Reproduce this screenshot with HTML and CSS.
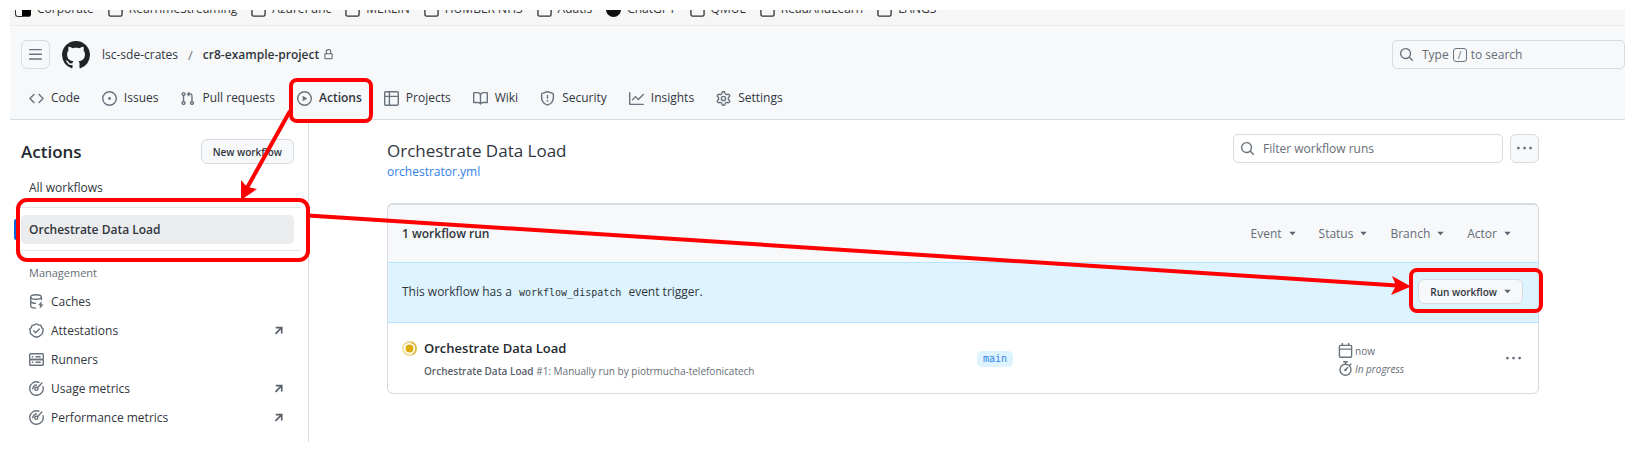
FILE: index.html
```html
<!DOCTYPE html>
<html lang="en">
<head>
<meta charset="utf-8">
<title>Actions · cr8-example-project</title>
<link rel="stylesheet" href="styles.css">
</head>
<body>
<svg class="sprite" aria-hidden="true">
  <symbol id="folder" viewBox="0 0 16 16"><path d="M1 4.500A1.500 1.500 0 0 1 2.500 3h3.500l2 2h5.500A1.500 1.500 0 0 1 15 6.500v7a1.500 1.500 0 0 1-1.500 1.500h-11A1.500 1.500 0 0 1 1 13.500Z" fill="none" stroke="currentColor" stroke-width="1.400"/></symbol>
  <symbol id="bars" viewBox="0 0 16 16"><path d="M1 2.750A.75.75 0 0 1 1.750 2h12.500a.75.75 0 0 1 0 1.500H1.750A.75.75 0 0 1 1 2.750Zm0 5A.75.75 0 0 1 1.750 7h12.500a.75.75 0 0 1 0 1.500H1.750A.75.75 0 0 1 1 7.750ZM1.750 12h12.500a.75.75 0 0 1 0 1.500H1.750a.75.75 0 0 1 0-1.500Z"/></symbol>
  <symbol id="github" viewBox="0 0 16 16"><path d="M8 0c4.420 0 8 3.580 8 8a8.013 8.013 0 0 1-5.450 7.590c-.4.08-.55-.17-.55-.38 0-.27.01-1.130.01-2.200 0-.75-.25-1.230-.54-1.480 1.780-.2 3.650-.88 3.650-3.950 0-.88-.31-1.590-.82-2.150.08-.2.36-1.020-.08-2.120 0 0-.67-.22-2.200.82-.64-.18-1.320-.27-2-.27-.68 0-1.360.09-2 .27-1.530-1.030-2.200-.82-2.200-.82-.44 1.100-.16 1.920-.08 2.120-.51.56-.82 1.280-.82 2.150 0 3.060 1.860 3.750 3.640 3.950-.23.2-.44.55-.51 1.070-.46.21-1.610.55-2.330-.66-.15-.24-.6-.83-1.230-.82-.67.01-.27.38.01.53.34.19.73.9.82 1.130.16.45.68 1.310 2.690.94 0 .67.01 1.300.01 1.490 0 .21-.15.45-.55.38A7.995 7.995 0 0 1 0 8c0-4.420 3.580-8 8-8Z"/></symbol>
  <symbol id="lock" viewBox="0 0 16 16"><path d="M4 4a4 4 0 0 1 8 0v2h.25c.966 0 1.750.784 1.750 1.750v5.500A1.750 1.750 0 0 1 12.250 15h-8.500A1.750 1.750 0 0 1 2 13.250v-5.500C2 6.784 2.784 6 3.750 6H4Zm8.250 3.500h-8.500a.25.25 0 0 0-.25.25v5.500c0 .138.112.25.25.25h8.500a.25.25 0 0 0 .25-.25v-5.500a.25.25 0 0 0-.25-.25ZM10.500 6V4a2.500 2.500 0 1 0-5 0v2Z"/></symbol>
  <symbol id="code" viewBox="0 0 16 16"><path d="m11.280 3.220 4.250 4.250a.75.75 0 0 1 0 1.060l-4.250 4.250a.749.749 0 0 1-1.275-.326.749.749 0 0 1 .215-.734L13.940 8l-3.720-3.720a.749.749 0 0 1 .326-1.275.749.749 0 0 1 .734.215Zm-6.560 0a.751.751 0 0 1 1.042.018.751.751 0 0 1 .018 1.042L2.060 8l3.720 3.720a.749.749 0 0 1-.326 1.275.749.749 0 0 1-.734-.215L.47 8.530a.75.75 0 0 1 0-1.060Z"/></symbol>
  <symbol id="issue" viewBox="0 0 16 16"><path d="M8 9.500a1.500 1.500 0 1 0 0-3 1.500 1.500 0 0 0 0 3Z"/><path d="M8 0a8 8 0 1 1 0 16A8 8 0 0 1 8 0ZM1.500 8a6.500 6.500 0 1 0 13 0 6.500 6.500 0 0 0-13 0Z"/></symbol>
  <symbol id="pull" viewBox="0 0 16 16"><path d="M1.500 3.250a2.250 2.250 0 1 1 3 2.122v5.256a2.251 2.251 0 1 1-1.500 0V5.372A2.250 2.250 0 0 1 1.500 3.250Zm5.677-.177L9.573.677A.25.25 0 0 1 10 .854V2.500h1A2.500 2.500 0 0 1 13.500 5v5.628a2.251 2.251 0 1 1-1.500 0V5a1 1 0 0 0-1-1h-1v1.646a.25.25 0 0 1-.427.177L7.177 3.427a.25.25 0 0 1 0-.354ZM3.750 2.500a.75.75 0 1 0 0 1.500.75.75 0 0 0 0-1.500Zm0 9.500a.75.75 0 1 0 0 1.500.75.75 0 0 0 0-1.500Zm8.250.75a.75.75 0 1 0 1.500 0 .75.75 0 0 0-1.500 0Z"/></symbol>
  <symbol id="play" viewBox="0 0 16 16"><path d="M8 0a8 8 0 1 1 0 16A8 8 0 0 1 8 0ZM1.500 8a6.500 6.500 0 1 0 13 0 6.500 6.500 0 0 0-13 0Zm4.879-2.773 4.264 2.559a.25.25 0 0 1 0 .428l-4.264 2.559A.25.25 0 0 1 6 10.559V5.442a.25.25 0 0 1 .379-.215Z"/></symbol>
  <symbol id="table" viewBox="0 0 16 16"><path d="M0 1.750C0 .784.784 0 1.750 0h12.500C15.216 0 16 .784 16 1.750v12.500A1.750 1.750 0 0 1 14.250 16H1.750A1.750 1.750 0 0 1 0 14.250ZM6.500 6.500v8h7.750a.25.25 0 0 0 .25-.25V6.500Zm8-1.500V1.750a.25.25 0 0 0-.25-.25H6.500V5Zm-13 1.500v7.750c0 .138.112.25.25.25H5v-8ZM5 5V1.500H1.750a.25.25 0 0 0-.25.25V5Z"/></symbol>
  <symbol id="book" viewBox="0 0 16 16"><path d="M0 1.750A.75.75 0 0 1 .75 1h4.253c1.227 0 2.317.59 3 1.501A3.743 3.743 0 0 1 11.006 1h4.245a.75.75 0 0 1 .75.75v10.500a.75.75 0 0 1-.75.75h-4.507a2.250 2.250 0 0 0-1.591.659l-.622.621a.75.75 0 0 1-1.060 0l-.622-.621A2.250 2.250 0 0 0 5.258 13H.75a.75.75 0 0 1-.75-.75Zm7.251 10.324.004-5.073-.002-2.253A2.250 2.250 0 0 0 5.003 2.500H1.500v9h3.757a3.750 3.750 0 0 1 1.994.574ZM8.755 4.750l-.004 7.322a3.752 3.752 0 0 1 1.992-.572H14.500v-9h-3.495a2.250 2.250 0 0 0-2.250 2.250Z"/></symbol>
  <symbol id="shield" viewBox="0 0 16 16"><path d="M7.467.133a1.748 1.748 0 0 1 1.066 0l5.250 1.680A1.750 1.750 0 0 1 15 3.480V7c0 1.566-.32 3.182-1.303 4.682-.983 1.498-2.585 2.813-5.032 3.855a1.697 1.697 0 0 1-1.330 0c-2.447-1.042-4.049-2.357-5.032-3.855C1.320 10.182 1 8.566 1 7V3.480a1.750 1.750 0 0 1 1.217-1.667Zm.61 1.429a.25.25 0 0 0-.153 0l-5.250 1.680a.25.25 0 0 0-.174.238V7c0 1.358.275 2.666 1.057 3.860.784 1.194 2.121 2.340 4.366 3.297a.196.196 0 0 0 .154 0c2.245-.956 3.582-2.104 4.366-3.298C13.225 9.666 13.500 8.360 13.500 7V3.480a.251.251 0 0 0-.174-.237l-5.250-1.680ZM8.750 4.750v3a.75.75 0 0 1-1.500 0v-3a.75.75 0 0 1 1.500 0ZM9 10.500a1 1 0 1 1-2 0 1 1 0 0 1 2 0Z"/></symbol>
  <symbol id="graph" viewBox="0 0 16 16"><path d="M1.500 1.750V13.500h13.750a.75.75 0 0 1 0 1.500H.75a.75.75 0 0 1-.75-.75V1.750a.75.75 0 0 1 1.500 0Zm14.280 2.530-5.250 5.250a.75.75 0 0 1-1.060 0L7 7.060 4.280 9.780a.751.751 0 0 1-1.042-.018.751.751 0 0 1-.018-1.042l3.250-3.250a.75.75 0 0 1 1.060 0L10 7.940l4.720-4.720a.751.751 0 0 1 1.042.018.751.751 0 0 1 .018 1.042Z"/></symbol>
  <symbol id="gear" viewBox="0 0 16 16"><path d="M8 0a8.200 8.200 0 0 1 .701.031C9.444.095 9.990.645 10.160 1.290l.288 1.107c.018.066.079.158.212.224.231.114.454.243.668.386.123.082.233.09.299.071l1.103-.303c.644-.176 1.392.021 1.820.63.27.385.506.792.704 1.218.315.675.111 1.422-.364 1.891l-.814.806c-.049.048-.098.147-.088.294.016.257.016.515 0 .772-.01.147.038.246.088.294l.814.806c.475.469.679 1.216.364 1.891a7.977 7.977 0 0 1-.704 1.217c-.428.61-1.176.807-1.820.63l-1.102-.302c-.067-.019-.177-.011-.3.071a5.909 5.909 0 0 1-.668.386c-.133.066-.194.158-.211.224l-.29 1.106c-.168.646-.715 1.196-1.458 1.260a8.006 8.006 0 0 1-1.402 0c-.743-.064-1.289-.614-1.458-1.260l-.289-1.106c-.018-.066-.079-.158-.212-.224a5.738 5.738 0 0 1-.668-.386c-.123-.082-.233-.09-.299-.071l-1.103.303c-.644.176-1.392-.021-1.820-.63a8.120 8.120 0 0 1-.704-1.218c-.315-.675-.111-1.422.363-1.891l.815-.806c.05-.048.098-.147.088-.294a6.214 6.214 0 0 1 0-.772c.01-.147-.038-.246-.088-.294l-.815-.806C.635 6.045.431 5.298.746 4.623a7.920 7.920 0 0 1 .704-1.217c.428-.61 1.176-.807 1.820-.63l1.102.302c.067.019.177.011.3-.071.214-.143.437-.272.668-.386.133-.066.194-.158.211-.224l.29-1.106C6.009.645 6.556.095 7.299.03 7.530.01 7.764 0 8 0Zm-.571 1.525c-.036.003-.108.036-.137.146l-.289 1.105c-.147.561-.549.967-.998 1.189-.173.086-.34.183-.5.29-.417.278-.97.423-1.529.27l-1.103-.303c-.109-.03-.175.016-.195.045-.22.312-.412.644-.573.99-.014.031-.021.11.059.19l.815.806c.411.406.562.957.53 1.456a4.709 4.709 0 0 0 0 .582c.032.499-.119 1.050-.53 1.456l-.815.806c-.081.08-.073.159-.059.19.162.346.353.677.573.989.02.03.085.076.195.046l1.102-.303c.56-.153 1.113-.008 1.530.27.161.107.328.204.501.29.447.222.85.629.997 1.189l.289 1.105c.029.109.101.143.137.146a6.600 6.600 0 0 0 1.142 0c.036-.003.108-.036.137-.146l.289-1.105c.147-.561.549-.967.998-1.189.173-.086.34-.183.5-.29.417-.278.97-.423 1.529-.27l1.103.303c.109.029.175-.016.195-.045.22-.313.411-.644.573-.99.014-.031.021-.11-.059-.19l-.815-.806c-.411-.406-.562-.957-.53-1.456a4.709 4.709 0 0 0 0-.582c-.032-.499.119-1.050.53-1.456l.815-.806c.081-.08.073-.159.059-.19a6.464 6.464 0 0 0-.573-.989c-.02-.03-.085-.076-.195-.046l-1.102.303c-.56.153-1.113.008-1.530-.27a4.440 4.440 0 0 0-.501-.29c-.447-.222-.85-.629-.997-1.189l-.289-1.105c-.029-.11-.101-.143-.137-.146a6.600 6.600 0 0 0-1.142 0ZM11 8a3 3 0 1 1-6 0 3 3 0 0 1 6 0ZM9.500 8a1.500 1.500 0 1 0-3.001.001A1.500 1.500 0 0 0 9.500 8Z"/></symbol>
  <symbol id="search" viewBox="0 0 16 16"><path d="M10.680 11.740a6 6 0 0 1-7.922-8.982 6 6 0 0 1 8.982 7.922l3.040 3.040a.749.749 0 0 1-.326 1.275.749.749 0 0 1-.734-.215ZM11.500 7a4.499 4.499 0 1 0-8.997 0A4.499 4.499 0 0 0 11.500 7Z"/></symbol>
  <symbol id="dots" viewBox="0 0 16 16"><path d="M8 9a1.500 1.500 0 1 0 0-3 1.500 1.500 0 0 0 0 3ZM1.500 9a1.500 1.500 0 1 0 0-3 1.500 1.500 0 0 0 0 3Zm13 0a1.500 1.500 0 1 0 0-3 1.500 1.500 0 0 0 0 3Z"/></symbol>
  <symbol id="arrow" viewBox="0 0 16 16"><path d="M3.500 13 12 4.500M4 3.800h8.700v8.700" fill="none" stroke="currentColor" stroke-width="2.400"/></symbol>
  <symbol id="caret" viewBox="0 0 8 8"><path d="M0.500 2h7L4 6Z"/></symbol>
  <symbol id="cache" viewBox="0 0 16 16"><g fill="none" stroke="currentColor" stroke-width="1.500"><ellipse cx="7.500" cy="3.200" rx="5.700" ry="2.400"/><path d="M1.800 3.200v9.300c0 1.400 2.300 2.500 5.700 2.600M13.200 3.200v3.300M1.800 7.900c.6 1.200 2.800 2 5.700 2.100"/></g><path d="M13.500 7.500 9.700 12h2.100l-.5 3.800 4.300-4.700h-2.300Z"/></symbol>
  <symbol id="verified" viewBox="0 0 16 16"><g fill="none" stroke="currentColor" stroke-width="1.500"><path d="M8 .8 10.100 2.100 12.600 2.300 13.500 4.700 15.200 6.500 14.700 8.900 14.400 11.200 12.600 12.800 10.700 14.300 8 15.200 5.300 14.300 3.400 12.800 1.600 11.200 1.300 8.900.8 6.500 2.500 4.700 3.400 2.300 5.900 2.100Z" stroke-linejoin="round"/><path d="m5 8.200 2.100 2.100L11 6.300" stroke-linecap="round"/></g></symbol>
  <symbol id="server" viewBox="0 0 16 16"><g fill="none" stroke="currentColor" stroke-width="1.500"><rect x=".75" y="1.800" width="14.500" height="6.200" rx="1"/><rect x=".75" y="8" width="14.500" height="6.200" rx="1"/><path d="M3 5h1.500M7 5h5.500M3 11h1.500M7 11h5.500"/></g></symbol>
  <symbol id="meter" viewBox="0 0 16 16"><g fill="none" stroke="currentColor" stroke-width="1.500" stroke-linecap="round"><path d="M10.500 1.300A7.200 7.200 0 1 0 14.900 6"/><circle cx="7.800" cy="8.300" r="1.700"/><path d="m9.200 7 4.600-4.800M4 8.300A4 4 0 0 1 8 4.300"/></g></symbol>
  <symbol id="calendar" viewBox="0 0 16 16"><g fill="none" stroke="currentColor" stroke-width="1.500"><rect x="1.500" y="2.500" width="13" height="12.700" rx="1"/><path d="M1.500 6.500h13M4.700 0v3M11.300 0v3"/></g></symbol>
  <symbol id="stopwatch" viewBox="0 0 16 16"><g fill="none" stroke="currentColor" stroke-width="1.500" stroke-linecap="round"><circle cx="8" cy="9.300" r="5.900"/><path d="M6 .8h4M8 1v2.300M12.700 4.200l1-1M8 9.500l2.300-2.500"/></g><circle cx="7.900" cy="9.600" r="1.300"/></symbol>
</svg>

<div class="bookmarks">
  <span class="bookmark"><span class="fav"></span>Corporate</span>
  <span class="bookmark"><svg class="icon"><use href="#folder"/></svg>RealTimeStreaming</span>
  <span class="bookmark"><svg class="icon"><use href="#folder"/></svg>AzureFunc</span>
  <span class="bookmark"><svg class="icon"><use href="#folder"/></svg>MERLIN</span>
  <span class="bookmark"><svg class="icon"><use href="#folder"/></svg>HUMBER NHS</span>
  <span class="bookmark"><svg class="icon"><use href="#folder"/></svg>Adatis</span>
  <span class="bookmark"><span class="chat"></span>ChatGPT</span>
  <span class="bookmark"><svg class="icon"><use href="#folder"/></svg>QMUL</span>
  <span class="bookmark"><svg class="icon"><use href="#folder"/></svg>ReadAndLearn</span>
  <span class="bookmark"><svg class="icon"><use href="#folder"/></svg>LANGS</span>
</div>

<header class="header">
  <div class="topbar">
    <button class="square" aria-label="Open menu"><svg class="icon"><use href="#bars"/></svg></button>
    <a class="logo" href="#" aria-label="Home"><svg><use href="#github"/></svg></a>
    <a class="owner" href="#">lsc-sde-crates</a><span class="slash">/</span><a class="repo" href="#">cr8-example-project</a><svg class="lock"><use href="#lock"/></svg>
    <button class="global-search"><svg class="icon"><use href="#search"/></svg><span>Type</span><kbd>/</kbd><span>to search</span></button>
  </div>
  <nav class="tabs" aria-label="Repository">
    <a href="#"><svg class="icon"><use href="#code"/></svg>Code</a>
    <a href="#"><svg class="icon"><use href="#issue"/></svg>Issues</a>
    <a href="#"><svg class="icon"><use href="#pull"/></svg>Pull requests</a>
    <a href="#" class="current"><svg class="icon"><use href="#play"/></svg>Actions</a>
    <a href="#"><svg class="icon"><use href="#table"/></svg>Projects</a>
    <a href="#"><svg class="icon"><use href="#book"/></svg>Wiki</a>
    <a href="#"><svg class="icon"><use href="#shield"/></svg>Security</a>
    <a href="#"><svg class="icon"><use href="#graph"/></svg>Insights</a>
    <a href="#"><svg class="icon"><use href="#gear"/></svg>Settings</a>
  </nav>
</header>

<div class="layout">
  <aside class="sidebar">
    <div class="side-head"><h2>Actions</h2><button class="btn">New workflow</button></div>
    <a class="side-link" href="#">All workflows</a>
    <div class="workflows"><a class="side-link selected" href="#">Orchestrate Data Load</a></div>
    <h3>Management</h3>
    <nav class="manage" aria-label="Management">
      <a class="side-link" href="#"><svg class="icon"><use href="#cache"/></svg>Caches</a>
      <a class="side-link" href="#"><svg class="icon"><use href="#verified"/></svg>Attestations<svg class="out"><use href="#arrow"/></svg></a>
      <a class="side-link" href="#"><svg class="icon"><use href="#server"/></svg>Runners</a>
      <a class="side-link" href="#"><svg class="icon"><use href="#meter"/></svg>Usage metrics<svg class="out"><use href="#arrow"/></svg></a>
      <a class="side-link" href="#"><svg class="icon"><use href="#meter"/></svg>Performance metrics<svg class="out"><use href="#arrow"/></svg></a>
    </nav>
  </aside>
  <main class="main">
    <div class="page-head">
      <div class="page-title"><h1>Orchestrate Data Load</h1><a href="#">orchestrator.yml</a></div>
      <label class="filter"><svg class="icon"><use href="#search"/></svg><input type="text" placeholder="Filter workflow runs" aria-label="Filter workflow runs"></label>
      <button class="square" aria-label="Show workflow options"><svg class="icon"><use href="#dots"/></svg></button>
    </div>
    <section class="runs">
      <div class="runs-head">
        <strong>1 workflow run</strong>
        <div class="filters">
          <button>Event<svg class="caret"><use href="#caret"/></svg></button>
          <button>Status<svg class="caret"><use href="#caret"/></svg></button>
          <button>Branch<svg class="caret"><use href="#caret"/></svg></button>
          <button>Actor<svg class="caret"><use href="#caret"/></svg></button>
        </div>
      </div>
      <div class="dispatch">
        <p>This workflow has a <code>workflow_dispatch</code> event trigger.</p>
        <button class="btn">Run workflow<svg class="caret"><use href="#caret"/></svg></button>
      </div>
      <div class="run">
        <div class="run-info">
          <svg class="status" viewBox="0 0 16 16" role="img" aria-label="In progress"><circle cx="8" cy="8" r="7" fill="none" stroke="#f0dc9a" stroke-width="2"/><path d="M10 1.300A7 7 0 0 1 11 14.300" fill="none" stroke="#dfb63a" stroke-width="1.600"/><circle cx="8" cy="8" r="4.200" fill="#dbab0a"/></svg>
          <div>
            <a class="run-title" href="#">Orchestrate Data Load</a>
            <p class="run-sub"><b>Orchestrate Data Load</b> #1: Manually run by piotrmucha-telefonicatech</p>
          </div>
        </div>
        <div class="branch"><a href="#">main</a></div>
        <div class="times">
          <span><svg class="icon"><use href="#calendar"/></svg>now</span>
          <span><svg class="icon"><use href="#stopwatch"/></svg><i>In progress</i></span>
        </div>
        <button class="more" aria-label="Show options"><svg class="icon"><use href="#dots"/></svg></button>
      </div>
    </section>
  </main>
</div>

<svg class="marks" viewBox="0 0 1636 452" aria-hidden="true">
  <g fill="none" stroke="#f00" stroke-width="4">
    <rect x="291" y="80" width="80" height="41" rx="6"/>
    <rect x="18" y="200" width="290" height="60" rx="9"/>
    <rect x="1411" y="270" width="130" height="41" rx="6"/>
    <path d="M290 111 247 188M308 215.500 1397 285.500"/>
  </g>
  <path fill="#f00" d="M241 200 241 180 247 187 257 189ZM1411 286.500 1392 276 1396 285.500 1391 295Z"/>
</svg>
</body>
</html>
```
FILE: styles.css
```css
* { box-sizing: border-box; }
body {
  margin: 0;
  min-height: 100vh;
  padding: 10px 11px 10px 10px;
  display: flex;
  flex-direction: column;
  position: relative;
  background: #fff;
  color: #30363d;
  font: 12px/18px "Open Sans", "Noto Sans", sans-serif;
}
a { color: inherit; text-decoration: none; }
h1, h2, h3, p { margin: 0; }
button, input { font: inherit; color: inherit; margin: 0; }
svg { fill: currentColor; flex: none; display: block; }
.sprite { position: absolute; width: 0; height: 0; }
.icon { width: 15px; height: 15px; color: #6a737d; }

.bookmarks {
  display: flex;
  align-items: flex-end;
  gap: 14px;
  height: 15px;
  padding: 0 5px 8px;
  overflow: hidden;
  background: #f6f6f6;
  color: #333;
}
.bookmark { display: flex; align-items: flex-end; gap: 6px; line-height: 16px; white-space: nowrap; }
.bookmark .icon { color: #333; }
.fav { width: 16px; height: 15px; border: 1px solid #333; border-radius: 3px; border-right: 9px solid #000; }
.chat { width: 15px; height: 15px; border-radius: 50%; background: #111; }

.header { background: #f6f8fa; border-top: 1px solid #ebecee; border-bottom: 1px solid #d5dbe1; }
.topbar { display: flex; align-items: center; padding: 14px 0 14px 11px; }
.square {
  display: flex;
  align-items: center;
  justify-content: center;
  width: 29px;
  height: 29px;
  padding: 0;
  border: 1px solid #d5dbe1;
  border-radius: 6px;
  background: #f6f8fa;
}
.logo { margin: 0 12px; color: #1f2328; }
.logo svg { width: 28px; height: 28px; }
.slash { padding: 0 10px; color: #6a737d; font-size: 13px; }
.repo { font-weight: 600; }
.lock { width: 11px; height: 11px; margin-left: 4px; color: #57606a; }
.global-search {
  display: flex;
  align-items: center;
  gap: 4px;
  width: 233px;
  height: 29px;
  margin-left: auto;
  padding: 0 6px;
  border: 1px solid #d5dbe1;
  border-radius: 5px;
  background: #f6f8fa;
  color: #656d76;
}
.global-search .icon { margin-right: 4px; }
.global-search kbd {
  width: 14px;
  height: 14px;
  border: 1px solid #6a737d;
  border-radius: 3px;
  font: 10px/12px "Open Sans", sans-serif;
  text-align: center;
}
.tabs { display: flex; gap: 22px; padding: 5px 19px 11px; }
.tabs a { display: flex; align-items: center; gap: 7px; line-height: 20px; }
.tabs .current { font-weight: 600; }

.layout { flex: 1; display: flex; }
.sidebar { flex: none; width: 299px; padding: 19px 14px 0 11px; border-right: 1px solid #d5dbe1; }
.side-head { display: flex; align-items: center; justify-content: space-between; }
.side-head h2 { font-size: 17px; line-height: 25px; font-weight: 600; color: #24292f; }
.btn {
  display: flex;
  align-items: center;
  gap: 7px;
  height: 25px;
  padding: 0 11px;
  border: 1px solid #d5dbe1;
  border-radius: 6px;
  background: #f6f8fa;
  font-size: 10px;
  font-weight: 600;
}
.side-link { display: flex; align-items: center; gap: 7px; height: 29px; padding: 0 8px; border-radius: 5px; }
.side-head + .side-link { margin: 9px 0 5px; }
.workflows { margin: 0 -7px 0 -6px; padding: 7px 7px 6px 6px; border: solid #e1e6eb; border-width: 1px 0; }
.selected { position: relative; background: #ebecee; font-weight: 600; }
.selected::before { content: ""; position: absolute; left: -7px; width: 4px; height: 21px; border-radius: 3px; background: #0969da; }
.sidebar h3 { padding: 14px 8px 6px; font-size: 11px; line-height: 16px; font-weight: 400; color: #656d76; }
.out { width: 11px; height: 11px; margin: 0 2px 0 auto; color: #57606a; }

.main { flex: 1; min-width: 0; padding: 14px 86px 0 78px; }
.page-head { display: flex; align-items: flex-start; gap: 7px; }
.page-title { flex: 1; padding-top: 5px; }
.page-title h1 { font-size: 17px; line-height: 24px; font-weight: 400; }
.page-title a { display: block; color: #2f81e8; }
.filter { position: relative; width: 270px; }
.filter .icon { position: absolute; left: 7px; top: 7px; }
.filter input {
  width: 100%;
  height: 29px;
  padding: 0 8px 0 29px;
  border: 1px solid #d5dbe1;
  border-radius: 5px;
  background: #fff;
}
.filter input::placeholder { color: #656d76; opacity: 1; }

.runs { margin-top: 22px; border: 1px solid #d5dbe1; border-top-width: 2px; border-radius: 6px; overflow: hidden; }
.runs-head { display: flex; align-items: center; justify-content: space-between; height: 57px; padding: 0 27px 0 14px; background: #f6f8fa; }
.runs-head strong { font-weight: 600; }
.filters { display: flex; gap: 23px; }
.filters button { display: flex; align-items: center; gap: 7px; padding: 0; border: 0; background: none; color: #656d76; }
.caret { width: 7px; height: 7px; color: #57606a; }
.dispatch {
  display: flex;
  align-items: center;
  justify-content: space-between;
  height: 61px;
  padding: 0 15px 2px 14px;
  border: solid #b6e3ff;
  border-width: 1px 0;
  background: #ddf4ff;
}
.dispatch code { padding: 2px 4px; font: 10px "DejaVu Sans Mono", monospace; }
.run { display: flex; align-items: center; height: 70px; padding: 0 17px 0 14px; }
.run-info { display: flex; gap: 7px; width: 50%; flex: 1; }
.status { width: 15px; height: 15px; margin-top: 4px; }
.run-title { font-size: 13px; line-height: 22px; font-weight: 600; color: #24292f; }
.run-sub { margin-top: 3px; font-size: 10px; line-height: 18px; color: #656d76; }
.run-sub b { font-weight: 600; color: #57606a; }
.branch { width: 361px; }
.branch a { display: inline-block; padding: 0 6px; border-radius: 5px; background: #ddf4ff; color: #2f81e8; font: 10px/16px "DejaVu Sans Mono", monospace; }
.times { width: 168px; padding-top: 3px; font-size: 10px; color: #656d76; }
.times span { display: flex; align-items: center; gap: 2px; }
.more { padding: 0; border: 0; background: none; }

.marks { position: absolute; left: 0; top: 0; width: 100%; pointer-events: none; }
```
